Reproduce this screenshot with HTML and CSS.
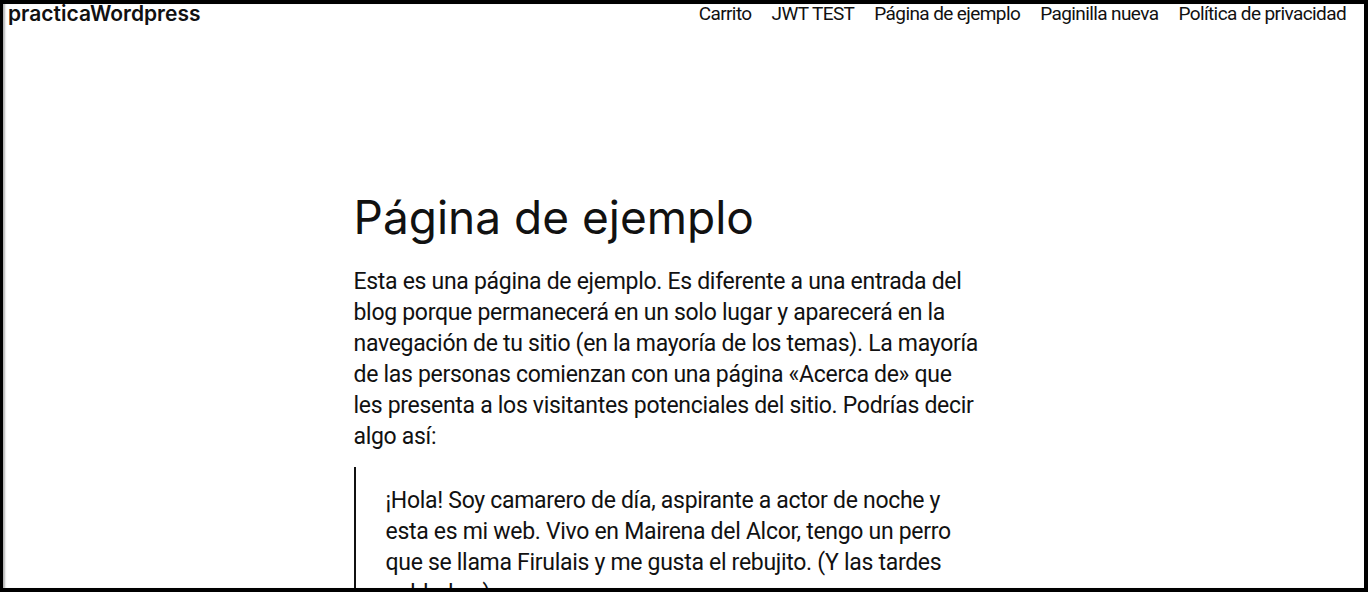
FILE: index.html
```html
<!DOCTYPE html>
<html lang="es">
<head>
<meta charset="utf-8">
<title>Página de ejemplo – practicaWordpress</title>
<link rel="stylesheet" href="styles.css">
</head>
<body>
<div class="frame">
  <header class="site-header">
    <a class="site-title" href="#">practicaWordpress</a>
    <nav class="site-nav">
      <a href="#">Carrito</a>
      <a href="#">JWT TEST</a>
      <a href="#">Página de ejemplo</a>
      <a href="#">Paginilla nueva</a>
      <a href="#">Política de privacidad</a>
    </nav>
  </header>
  <main class="content">
    <h1 class="page-title">Página de ejemplo</h1>
    <p class="lead">Esta es una página de ejemplo. Es diferente a una entrada del blog porque permanecerá en un solo lugar y aparecerá en la navegación de tu sitio (en la mayoría de los temas). La mayoría de las personas comienzan con una página «Acerca de» que les presenta a los visitantes potenciales del sitio. Podrías decir algo así:</p>
    <blockquote class="quote">
      <p>¡Hola! Soy camarero de día, aspirante a actor de noche y esta es mi web. Vivo en Mairena del Alcor, tengo un perro que se llama Firulais y me gusta el rebujito. (Y las tardes nubladas.)</p>
    </blockquote>
  </main>
</div>
</body>
</html>
```

FILE: styles.css
```css
* { box-sizing: border-box; }
html, body { margin: 0; padding: 0; background: #000; }
body {
  font-family: Roboto, "Noto Sans", sans-serif;
  color: #111;
}
.frame {
  height: 592px;
  overflow: hidden;
  background: #fff;
  border-style: solid;
  border-color: #000;
  border-width: 4px 4px 4px 3px;
  box-shadow: inset 3px 0 2px -1px rgba(0, 0, 0, 0.3);
}
.site-header {
  display: flex;
  justify-content: space-between;
  align-items: flex-start;
  padding: 0 18px 0 5px;
}
.site-title {
  font-family: Inter, "Noto Sans", sans-serif;
  font-size: 21px;
  font-weight: 600;
  color: #111;
  text-decoration: none;
  letter-spacing: 0;
  line-height: 20px;
}
.site-nav {
  display: flex;
  gap: 20px;
}
.site-nav a {
  font-size: 19px;
  color: #111;
  text-decoration: none;
  letter-spacing: -0.6px;
  line-height: 20px;
}
.content {
  width: 660px;
  margin: 0 auto;
  padding-top: 163px;
}
.page-title {
  margin: 0;
  font-family: Inter, "Noto Sans", sans-serif;
  font-size: 46px;
  font-weight: 400;
  letter-spacing: 0;
  line-height: 60px;
}
.lead {
  max-width: 627px;
  margin: 19px 0 0;
  font-size: 23px;
  line-height: 31px;
  letter-spacing: -0.3px;
}
.quote {
  max-width: 627px;
  margin: 15px 0 0;
  border-left: 2px solid #111;
  padding: 18px 10px 0 30px;
}
.quote p {
  margin: 0;
  font-size: 23px;
  line-height: 31px;
  letter-spacing: -0.3px;
}
```
